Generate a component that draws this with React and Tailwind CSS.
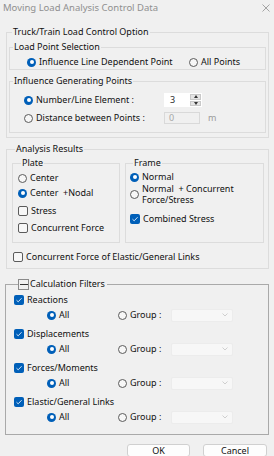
import React from 'react';

const BLUE = 'bg-[#005fb8]';

function Radio({ checked }) {
  return checked ? (
    <span className={`w-[9px] h-[9px] rounded-full ${BLUE} flex items-center justify-center shrink-0`}>
      <span className="w-[4px] h-[4px] rounded-full bg-white" />
    </span>
  ) : (
    <span className="w-[9px] h-[9px] rounded-full border border-[#5b5b5b] bg-[#f7f7f7] shrink-0" />
  );
}

function Check({ checked }) {
  return checked ? (
    <span className={`w-[10px] h-[10px] rounded-[2px] ${BLUE} flex items-center justify-center shrink-0`}>
      <svg width="8" height="8" viewBox="0 0 8 8" fill="none">
        <path d="M1.5 4.2 L3.2 5.8 L6.6 2.2" stroke="#cfe3f7" strokeWidth="1" />
      </svg>
    </span>
  ) : (
    <span className="w-[10px] h-[10px] rounded-[2px] border border-[#5b5b5b] bg-[#f7f7f7] shrink-0" />
  );
}

function RadioLabel({ checked, children, className = '' }) {
  return (
    <div className={`flex items-center gap-[3px] h-[12px] ${className}`}>
      <Radio checked={checked} />
      <span>{children}</span>
    </div>
  );
}

function CheckLabel({ checked, children, className = '' }) {
  return (
    <div className={`flex items-center gap-[3px] h-[12px] ${className}`}>
      <Check checked={checked} />
      <span>{children}</span>
    </div>
  );
}

function Group({ title, className = '', children }) {
  return (
    <fieldset className={`border border-[#dcdcdc] ${className}`}>
      <legend className="ml-[3px] px-[1px] leading-[12px]">{title}</legend>
      {children}
    </fieldset>
  );
}

function Combo() {
  return (
    <div className="w-[62px] h-[13px] bg-[#f7f7f7] border border-[#ececec] rounded-[2px] flex items-center justify-end pr-[4px]">
      <svg width="6" height="4" viewBox="0 0 6 4" fill="none">
        <path d="M0.5 0.5 L3 3 L5.5 0.5" stroke="#c4c4c4" strokeWidth="0.8" />
      </svg>
    </div>
  );
}

function FilterItem({ label, first }) {
  return (
    <div className={first ? '' : 'mt-[6px]'}>
      <CheckLabel checked>{label}</CheckLabel>
      <div className="flex items-center h-[14px] mt-[2px]">
        <div className="w-[104px] pl-[33px]">
          <RadioLabel checked>All</RadioLabel>
        </div>
        <div className="w-[53px]">
          <RadioLabel>Group :</RadioLabel>
        </div>
        <Combo />
      </div>
    </div>
  );
}

export default function App() {
  return (
    <div
      className="w-[274px] h-[456px] bg-[#f0f0f0] overflow-hidden text-[9px] text-[#111] leading-[12px]"
      style={{ fontFamily: '"Noto Sans", "Open Sans", sans-serif' }}
    >
      {/* Title bar */}
      <div className="h-[15px] flex items-center justify-between pl-[3px] pr-[4px] text-[#8f8f8f] text-[9.5px]">
        <span>Moving Load Analysis Control Data</span>
        <svg width="8" height="8" viewBox="0 0 8 8" fill="none">
          <path d="M0.5 0.5 L7.5 7.5 M7.5 0.5 L0.5 7.5" stroke="#8f8f8f" strokeWidth="0.8" />
        </svg>
      </div>

      {/* Truck/Train */}
      <Group title="Truck/Train Load Control Option" className="mt-[11px] ml-[6px] w-[263px] px-[2px] pb-[4px]">
        <Group title="Load Point Selection" className="mt-[3px]">
          <div className="flex items-center h-[14px] mt-[2px] pl-[17px]">
            <RadioLabel checked className="w-[162px]">Influence Line Dependent Point</RadioLabel>
            <RadioLabel>All Points</RadioLabel>
          </div>
        </Group>
        <Group title="Influence Generating Points" className="mt-[5px] pb-[7px]">
          <div className="flex items-center h-[14px] mt-[6px] pl-[14px]">
            <RadioLabel checked className="w-[140px]">Number/Line Element :</RadioLabel>
            <div className="w-[38px] h-[14px] bg-white flex">
              <span className="flex-1 pl-[6px] leading-[14px] text-[#2b2b2b]">3</span>
              <div className="w-[12px] flex flex-col gap-[1px] py-[1px] pr-[1px]">
                <div className="flex-1 bg-[#e4e4e4] border border-[#c9c9c9] flex items-center justify-center">
                  <svg width="4" height="3" viewBox="0 0 4 3"><path d="M0 3 L2 0 L4 3 Z" fill="#333" /></svg>
                </div>
                <div className="flex-1 bg-[#e4e4e4] border border-[#c9c9c9] flex items-center justify-center">
                  <svg width="4" height="3" viewBox="0 0 4 3"><path d="M0 0 L2 3 L4 0 Z" fill="#333" /></svg>
                </div>
              </div>
            </div>
          </div>
          <div className="flex items-center h-[14px] mt-[4px] pl-[14px]">
            <RadioLabel className="w-[140px]">Distance between Points :</RadioLabel>
            <div className="w-[36px] h-[12px] bg-[#f0f0f0] border border-[#d9d9d9] pl-[4px] leading-[10px] text-[#a6a6a6]">0</div>
            <span className="ml-[8px] text-[#9a9a9a]">m</span>
          </div>
        </Group>
      </Group>

      {/* Analysis Results */}
      <Group title="Analysis Results" className="mt-[5px] ml-[6px] w-[263px] pl-[5px] pr-[4px] pb-[5px]">
        <div className="flex gap-[5px] mt-[2px]">
          <Group title="Plate" className="w-[108px] pl-[5px] pb-[7px]">
            <RadioLabel className="mt-[3px]">Center</RadioLabel>
            <RadioLabel checked className="mt-[3px]">Center &nbsp;+Nodal</RadioLabel>
            <CheckLabel className="mt-[6px]">Stress</CheckLabel>
            <CheckLabel className="mt-[5px]">Concurrent Force</CheckLabel>
          </Group>
          <Group title="Frame" className="w-[139px] pl-[4px] pb-[17px]">
            <RadioLabel checked className="mt-[2px]">Normal</RadioLabel>
            <div className="flex items-center gap-[3px]">
              <Radio />
              <div className="flex flex-col">
                <span className="h-[11px] leading-[11px]">Normal &nbsp;+ Concurrent</span>
                <span className="h-[11px] leading-[11px]">Force/Stress</span>
              </div>
            </div>
            <CheckLabel checked className="mt-[8px]">Combined Stress</CheckLabel>
          </Group>
        </div>
        <CheckLabel className="mt-[8px] pl-[1px]">Concurrent Force of Elastic/General Links</CheckLabel>
      </Group>

      {/* Calculation Filters */}
      <fieldset className="mt-[9px] ml-[5px] w-[264px] border border-[#a9a9a9] pl-[8px] pb-[10px]">
        <legend className="ml-[4px] leading-[12px] flex items-center pr-[2px]">
          <span className="w-[11px] h-[11px] border border-[#8a8a8a] flex items-center justify-center mr-[1px]">
            <span className="w-[8px] h-px bg-[#333]" />
          </span>
          Calculation Filters
        </legend>
        <div className="mt-[4px]">
          <FilterItem label="Reactions" first />
          <FilterItem label="Displacements" />
          <FilterItem label="Forces/Moments" />
          <FilterItem label="Elastic/General Links" />
        </div>
      </fieldset>

      {/* Buttons */}
      <div className="flex justify-end gap-[13px] pr-[7px] mt-[9px]">
        <button className="w-[63px] h-[13px] bg-[#fdfdfd] border border-[#d0d0d0] rounded-[3px] text-[9px] leading-[11px]">OK</button>
        <button className="w-[64px] h-[13px] bg-[#fdfdfd] border border-[#d0d0d0] rounded-[3px] text-[9px] leading-[11px]">Cancel</button>
      </div>
    </div>
  );
}
